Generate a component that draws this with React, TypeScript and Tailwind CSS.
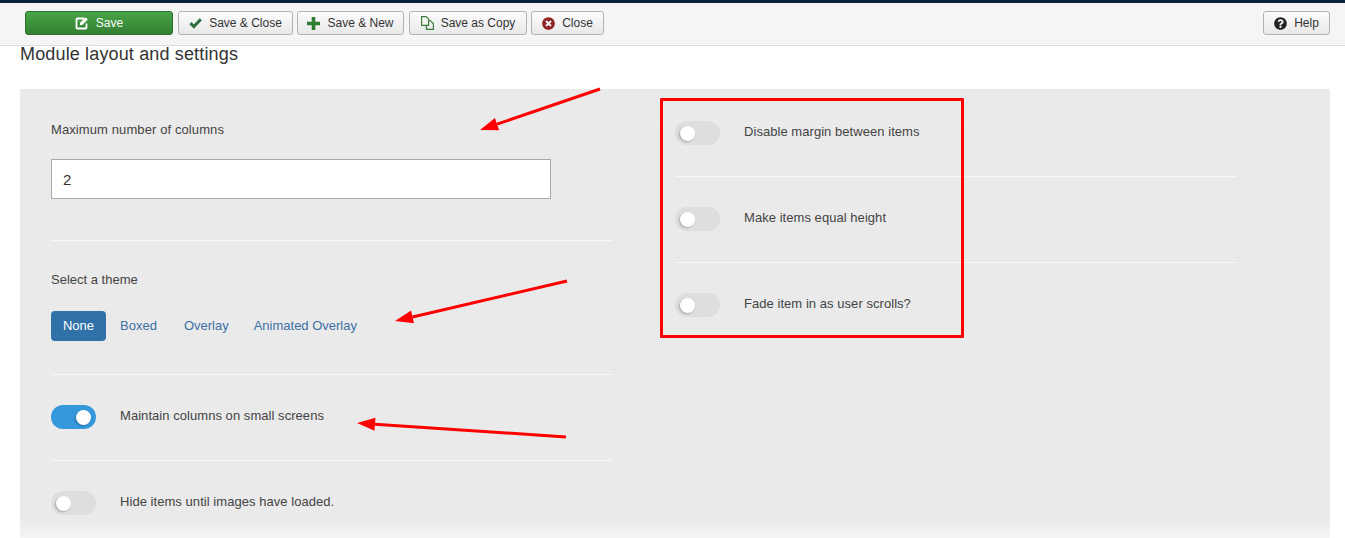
import type { ReactNode } from 'react';
import { FaQuestionCircle, FaTimesCircle } from 'react-icons/fa';

function ToolButton({ icon, label, width }: { icon: ReactNode; label: string; width: string }) {
  return (
    <button
      type="button"
      className={`flex h-6 items-center justify-center gap-[7px] rounded-[3px] border border-[#b3b3b3] bg-gradient-to-b from-[#fcfcfc] to-[#e8e8e8] text-[12px] text-[#333333] ${width}`}
    >
      {icon}
      <span>{label}</span>
    </button>
  );
}

function EditIcon() {
  return (
    <svg width="14" height="14" viewBox="0 0 14 14" fill="none">
      <path d="M9 2.5H2.5a1 1 0 0 0-1 1v8a1 1 0 0 0 1 1h8a1 1 0 0 0 1-1V7.5" stroke="#ffffff" strokeWidth="1.8" />
      <path d="M5 6.8 10.6 1.2l2.2 2.2L7.2 9H5z" fill="#ffffff" />
    </svg>
  );
}

function CheckIcon() {
  return (
    <svg width="13" height="12" viewBox="0 0 13 12" fill="none">
      <path d="M1.4 6.2 4.9 9.6 11.8 2.2" stroke="#2f6f3f" strokeWidth="3" />
    </svg>
  );
}

function PlusIcon() {
  return (
    <svg width="13" height="13" viewBox="0 0 13 13">
      <path d="M4.7 0h3.6v4.7H13v3.6H8.3V13H4.7V8.3H0V4.7h4.7z" fill="#2f7d32" />
    </svg>
  );
}

function CopyIcon() {
  return (
    <svg width="13" height="14" viewBox="0 0 13 14" fill="none" stroke="#3f7d3f" strokeWidth="1.2">
      <path d="M.6.6h4.6l2.4 2.4v6.4H.6z" />
      <path d="M7.6 4.6h1.6l3.2 3v5.8H5.4V9.4" />
    </svg>
  );
}

function Toggle({ on = false }: { on?: boolean }) {
  return (
    <span className={`flex h-6 w-[45px] shrink-0 items-center rounded-full px-[5px] ${on ? 'justify-end bg-[#3498db]' : 'bg-[#dedede]'}`}>
      <span className="h-[15px] w-[15px] rounded-full bg-white shadow-[-1px_1px_2px_rgba(0,0,0,0.25)]" />
    </span>
  );
}

function ToggleRow({ label, on }: { label: string; on?: boolean }) {
  return (
    <div className="flex h-6 items-center gap-6 text-[13px] tracking-[0.05px] text-[#444444]">
      <Toggle on={on} />
      <span className="pb-[3px]">{label}</span>
    </div>
  );
}

function Rule() {
  return <div className="h-px bg-[#f7f7f7]" />;
}

function Arrow({ x1, y1, x2, y2 }: { x1: number; y1: number; x2: number; y2: number }) {
  const angle = Math.atan2(y2 - y1, x2 - x1);
  const back = 18;
  const spread = 6.5;
  const bx = x2 - Math.cos(angle) * back;
  const by = y2 - Math.sin(angle) * back;
  const nx = -Math.sin(angle) * spread;
  const ny = Math.cos(angle) * spread;
  return (
    <>
      <line x1={x1} y1={y1} x2={bx} y2={by} stroke="#ff0000" strokeWidth="3" />
      <polygon points={`${x2},${y2} ${bx + nx},${by + ny} ${bx - nx},${by - ny}`} fill="#ff0000" />
    </>
  );
}

export default function App() {
  return (
    <div className="relative h-[538px] w-[1345px] overflow-hidden bg-white font-['Liberation_Sans',Arial,sans-serif]">
      <div className="h-[3px] bg-[#0c233f]" />
      <div className="flex h-[43px] items-start justify-between border-b border-[#dddddd] bg-[#f5f5f5] pl-[25px] pr-[15px] pt-2">
        <div className="flex gap-[4px]">
          <button
            type="button"
            className="mr-px flex h-6 w-[148px] items-center justify-center gap-[7px] rounded-[3px] border border-[#2f702f] bg-gradient-to-b from-[#46a546] to-[#348034] text-[12px] text-white"
          >
            <EditIcon />
            <span>Save</span>
          </button>
          <ToolButton icon={<CheckIcon />} label="Save & Close" width="w-[115px]" />
          <ToolButton icon={<PlusIcon />} label="Save & New" width="w-[107px]" />
          <ToolButton icon={<CopyIcon />} label="Save as Copy" width="w-[118px] ml-px" />
          <ToolButton icon={<FaTimesCircle className="text-[13px] text-[#8f2323]" />} label="Close" width="w-[73px]" />
        </div>
        <ToolButton icon={<FaQuestionCircle className="text-[13px] text-[#222222]" />} label="Help" width="w-[67px]" />
      </div>

      <h2 className="ml-5 h-[43px] text-[18px] leading-[17px] tracking-[0.15px] text-[#333333]">Module layout and settings</h2>

      <div className="relative ml-5 mr-[15px] h-[449px] bg-[#eaeaea] pl-[30px] pr-8 pt-[33px]">
        <div className="flex h-full border-l border-r border-t border-[#ededed]">
          <div className="w-[562px]">
            <div className="pt-px text-[13px] leading-[12px] tracking-[0.1px] text-[#444444]">Maximum number of columns</div>
            <input
              readOnly
              value="2"
              className="mt-[23px] box-border block h-10 w-[500px] border border-[#a9a9a9] bg-white px-[11px] text-[15px] text-[#333333]"
            />
            <div className="pt-[41px]">
              <Rule />
            </div>
            <div className="pt-[33px] text-[13px] leading-[12px] text-[#444444]">Select a theme</div>
            <div className="mt-[25px] flex h-[30px] items-center text-[13px] text-[#3d6fa8]">
              <span className="flex h-[30px] w-[55px] items-center justify-center rounded-[4px] bg-[#3071a9] text-white">None</span>
              <span className="ml-[14px]">Boxed</span>
              <span className="ml-[27px]">Overlay</span>
              <span className="ml-[25px]">Animated Overlay</span>
            </div>
            <div className="pt-[33px]">
              <Rule />
            </div>
            <div className="pt-[30px]">
              <ToggleRow label="Maintain columns on small screens" on />
            </div>
            <div className="pt-[31px]">
              <Rule />
            </div>
            <div className="pt-[30px]">
              <ToggleRow label="Hide items until images have loaded." />
            </div>
          </div>
          <div className="ml-[62px] -mt-[2px] w-[562px]">
            <ToggleRow label="Disable margin between items" />
            <div className="pb-[30px] pt-[31px]">
              <Rule />
            </div>
            <ToggleRow label="Make items equal height" />
            <div className="pb-[30px] pt-[31px]">
              <Rule />
            </div>
            <ToggleRow label="Fade item in as user scrolls?" />
          </div>
        </div>
        <div className="absolute inset-x-0 bottom-0 h-[18px] bg-gradient-to-b from-[#eaeaea] to-[#f5f5f5]" />
      </div>

      <div className="absolute left-[660px] top-[98px] h-[240px] w-[304px] rounded-[1px] border-[3px] border-[#ff0000]" />

      <svg className="absolute left-0 top-0" width="1345" height="538" viewBox="0 0 1345 538">
        <Arrow x1={600} y1={89} x2={480} y2={130} />
        <Arrow x1={567} y1={281} x2={395} y2={321} />
        <Arrow x1={566} y1={437} x2={357} y2={423} />
      </svg>
    </div>
  );
}
